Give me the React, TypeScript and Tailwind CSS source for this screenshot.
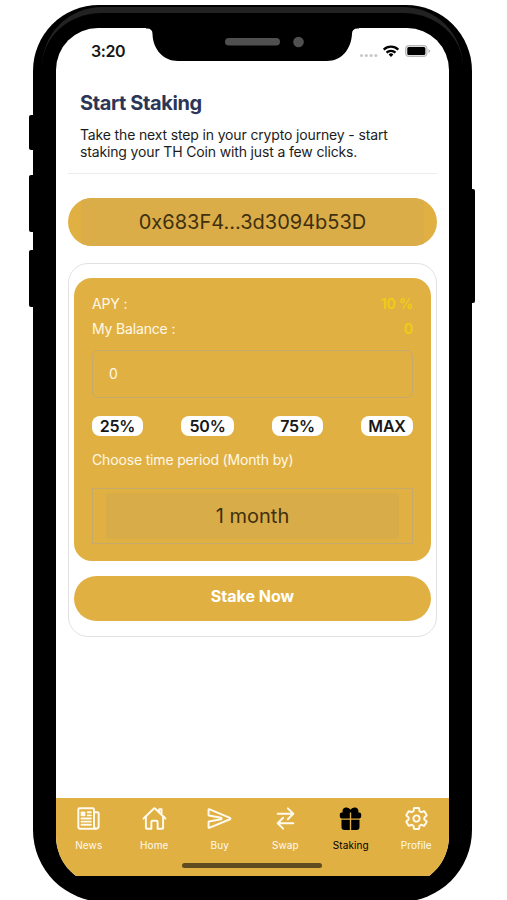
import {
  IoNewspaperOutline, IoHomeOutline, IoSendOutline,
  IoSwapHorizontalOutline, IoSettingsOutline,
} from "react-icons/io5";
import type { ComponentType } from "react";

type IconProps = { size?: number; className?: string };
type Tab = { label: string; icon: ComponentType<IconProps> };

// filled gift with a solid bow and a ribbon gap
const GiftIcon = ({ size = 25, className }: IconProps) => (
  <svg width={size} height={size} viewBox="0 0 25 25" className={className} fill="currentColor">
    <path d="M3.600 6.600H4.700C3.900 3.600 5.700 1.400 8.200 1.400C10.300 1.400 11.800 2.500 12.500 3.700C13.200 2.500 14.700 1.400 16.800 1.400C19.300 1.400 21.100 3.600 20.300 6.600H21.400Q23.200 6.600 23.200 8.400V10.600Q23.200 12.400 21.400 12.400H13.200V6.600H11.800V12.400H3.600Q1.800 12.400 1.800 10.600V8.400Q1.800 6.600 3.600 6.600Z" />
    <path d="M3.500 13.700H11.800V24H6.500Q3.500 24 3.500 21Z" />
    <path d="M13.200 13.700H21.500V21Q21.500 24 18.500 24H13.200Z" />
  </svg>
);

const TABS: Tab[] = [
  { label: "News",    icon: IoNewspaperOutline },
  { label: "Home",    icon: IoHomeOutline },
  { label: "Buy",     icon: IoSendOutline },
  { label: "Swap",    icon: IoSwapHorizontalOutline },
  { label: "Staking", icon: GiftIcon },
  { label: "Profile", icon: IoSettingsOutline },
];

const AMOUNTS = [
  { label: "25%", className: "w-[51px]" },
  { label: "50%", className: "w-[53px]" },
  { label: "75%", className: "w-[51px]" },
  { label: "MAX", className: "w-[52px]" },
];

// ⎯⎯⎯⎯⎯⎯⎯⎯⎯⎯⎯⎯⎯⎯⎯⎯⎯⎯⎯⎯⎯⎯⎯⎯⎯⎯⎯⎯⎯⎯⎯⎯⎯⎯⎯⎯⎯⎯⎯⎯⎯⎯⎯ //

const Notch = () => (
  <svg className="absolute left-[90px] top-0" width="213" height="34" viewBox="0 0 213 34">
    <path d="M0 0H213V.5H211.500Q206 .5 206 6C205 22 195 33 181 33H32C18 33 7 22 6.500 6Q6.500 .5 1 .5H0Z" fill="#000" />
    <rect x="79" y="10" width="55" height="7.500" rx="3.750" fill="#505050" />
    <circle cx="152.500" cy="14" r="5.300" fill="#505050" />
  </svg>
);

const StatusBar = () => (
  <div className="flex h-[46px] items-center justify-between pl-[35px] pr-[18px]">
    <span className="text-[16px] font-semibold leading-none tracking-[-0.4px] text-[#161616]">3:20</span>
    <svg width="72" height="16" viewBox="0 0 72 16">
      <g fill="#c9c9c9">
        <circle cx="2.500" cy="12.500" r="1.600" />
        <circle cx="7.300" cy="12.500" r="1.600" />
        <circle cx="12.100" cy="12.500" r="1.600" />
        <circle cx="16.900" cy="12.500" r="1.600" />
      </g>
      <g fill="none" stroke="#000" strokeWidth="2.200">
        <path d="M24.700 6.600a10.500 10.500 0 0 1 14.600 0" />
        <path d="M27.500 9.600a6.500 6.500 0 0 1 9 0" />
      </g>
      <path d="M32 14l-2.400-2.500a3.500 3.500 0 0 1 4.800 0Z" fill="#000" />
      <rect x="46.500" y="2.500" width="21.500" height="11" rx="3" fill="#ddd" stroke="#b5b5b5" />
      <rect x="48.300" y="4" width="18" height="8" rx="1.500" fill="#000" />
      <path d="M69.500 6.200v3.500q1.800-.6 1.800-1.750T69.500 6.200Z" fill="#b5b5b5" />
    </svg>
  </div>
);

const TabBar = ({ active }: { active: string }) => (
  <nav className="relative grid h-[88px] shrink-0 grid-cols-6 bg-[#e1b043]">
    {TABS.map(({ label, icon: Icon }) => (
      <div
        key={label}
        className={`flex flex-col items-center pt-2 ${label === active ? "text-black" : "text-[#fffaf0]"}`}
      >
        <Icon size={25} className="[&_[stroke-width]]:[stroke-width:40px]" />
        <span className="mt-2 text-[10px] leading-3 tracking-[0.1px]">{label}</span>
      </div>
    ))}
    <span className="absolute left-[126px] top-[65px] h-[5px] w-[140px] rounded-full bg-[#5f4c20]" />
  </nav>
);

const StakingCard = () => (
  <section className="mt-[17px] h-[374px] rounded-[20px] border border-[#e2e2e5] px-[5px] pt-[14px]">
    <div className="h-[283px] rounded-[18px] bg-[#e1b043] px-[18px] pt-[13px] text-[14px] tracking-[-0.16px] text-[#fff8e6]">
      <div className="flex h-[25px] items-center justify-between">
        <span>APY :</span>
        <span className="font-bold text-[#f0cb16]">10 %</span>
      </div>
      <div className="flex h-[25px] items-center justify-between">
        <span>My Balance :</span>
        <span className="font-bold text-[#f0cb16]">0</span>
      </div>
      <div className="mt-[9px] flex h-12 items-center rounded-[6px] border border-[#c5aa6b] px-4 pb-0.5">0</div>
      <div className="mt-[18px] flex justify-between">
        {AMOUNTS.map(({ label, className }) => (
          <button
            key={label}
            className={`${className} h-5 rounded-[8px] bg-white text-[16px] font-semibold leading-5 tracking-[-0.2px] text-[#161616]`}
          >
            {label}
          </button>
        ))}
      </div>
      <p className="mt-[14px] leading-5">Choose time period (Month by)</p>
      <div className="mt-[18px] h-14 border border-[#c5aa6b] px-[13px] py-1">
        <div className="flex h-full items-center justify-center rounded-[4px] bg-[#d9ac4a] text-[20px] tracking-normal text-[#40300e]">
          1 month
        </div>
      </div>
    </div>
    <button className="mt-[15px] flex h-[45px] w-full justify-center rounded-full bg-[#e1b043] pt-[10px] text-[16px] font-bold leading-5 text-white">
      Stake Now
    </button>
  </section>
);

export default function App() {
  return (
    <div className="relative h-[900px] w-[507px] overflow-hidden bg-white font-['Inter',sans-serif]">
      {/* side buttons */}
      <span className="absolute left-[29px] top-[115px] h-[35px] w-3 rounded-[2px] bg-black" />
      <span className="absolute left-[29px] top-[175px] h-[57px] w-3 rounded-[2px] bg-black" />
      <span className="absolute left-[29px] top-[250px] h-[57px] w-3 rounded-[2px] bg-black" />
      <span className="absolute left-[464px] top-[189px] h-[114px] w-[11px] rounded-[2px] bg-black" />

      <div className="relative ml-[33px] mt-[5px] h-[897px] w-[439px] rounded-t-[66px] rounded-b-[72px] bg-black px-[23px] pt-[23px]">
        <span className="absolute inset-x-[9px] top-[2px] h-[80px] rounded-t-[60px] border-t-[6px] border-[#222222]" />
        <div className="relative h-[848px] overflow-hidden">
          <div className="relative flex h-[858px] flex-col overflow-hidden rounded-t-[42px] rounded-b-[50px] bg-white">
            <Notch />
            <StatusBar />
            <main className="flex-1 px-3">
              <header className="h-[100px] border-b border-[#ececec] px-3 pt-[17px]">
                <h1 className="text-[20px] font-bold leading-6 tracking-[-0.4px] text-[#2b3558]">Start Staking</h1>
                <p className="mt-[11px] whitespace-nowrap text-[14px] leading-[17px] tracking-[-0.15px] text-[#1c1c1c]">
                  Take the next step in your crypto journey - start
                  <br />
                  staking your TH Coin with just a few clicks.
                </p>
              </header>
              <div className="mt-6 flex h-12 overflow-hidden rounded-full bg-[#e1b043] px-[13px]">
                <div className="flex flex-1 items-center justify-center bg-[#daad49] text-[20px] text-[#40300e]">
                  0x683F4...3d3094b53D
                </div>
              </div>
              <StakingCard />
            </main>
            <TabBar active="Staking" />
          </div>
        </div>
      </div>
    </div>
  );
}
